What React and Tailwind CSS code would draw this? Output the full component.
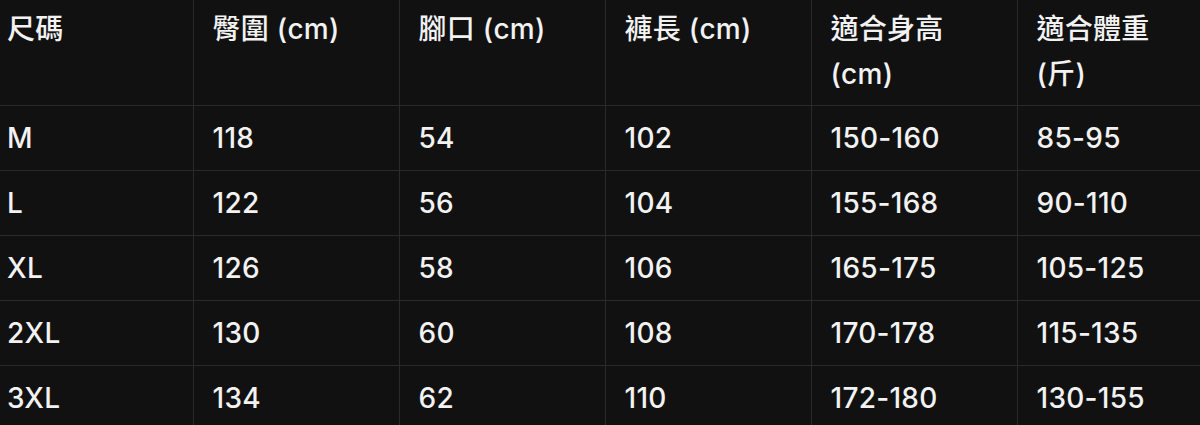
const headers = ["尺碼", "臀圍 (cm)", "腳口 (cm)", "褲長 (cm)", "適合身高 (cm)", "適合體重 (斤)"];

const rows = [
  ["M", "118", "54", "102", "150-160", "85-95"],
  ["L", "122", "56", "104", "155-168", "90-110"],
  ["XL", "126", "58", "106", "165-175", "105-125"],
  ["2XL", "130", "60", "108", "170-178", "115-135"],
  ["3XL", "134", "62", "110", "172-180", "130-155"],
];

const widths = ["w-[193px]", "w-[206px]", "w-[206px]", "w-[206px]", "w-[206px]", "w-[206px]"];

export default function App() {
  return (
    <div
      className="h-[425px] w-[1200px] overflow-hidden bg-[#111111] text-[#f2f2f2]"
      style={{ fontFamily: 'Inter, "Noto Sans CJK TC", sans-serif' }}
    >
      <table className="w-[1223px] table-fixed border-collapse text-[28px] font-medium leading-[45px] tracking-[0.01em]">
        <colgroup>
          {widths.map((w, i) => (
            <col key={i} className={w} />
          ))}
        </colgroup>
        <thead>
          <tr className="border-b border-[#2a2a2a]">
            {headers.map((h, i) => (
              <th
                key={h}
                className={`h-[105px] border-r border-[#2a2a2a] pt-[7px] pb-[8px] pr-[20px] text-left align-top font-medium ${
                  i === 0 ? "pl-[7px]" : "pl-[19px]"
                }`}
              >
                {h}
              </th>
            ))}
          </tr>
        </thead>
        <tbody>
          {rows.map((r) => (
            <tr key={r[0]} className="border-b border-[#2a2a2a]">
              {r.map((c, i) => (
                <td
                  key={i}
                  className={`h-[65px] border-r border-[#2a2a2a] py-[9px] align-middle ${
                    i === 0 ? "pl-[7px]" : "pl-[19px]"
                  }`}
                >
                  {c}
                </td>
              ))}
            </tr>
          ))}
        </tbody>
      </table>
    </div>
  );
}
